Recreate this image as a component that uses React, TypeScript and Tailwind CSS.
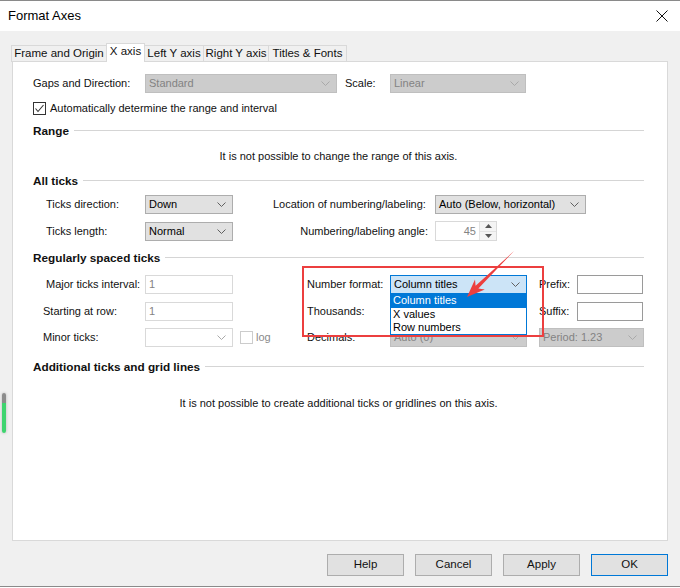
import React from "react";

const FONT = "font-['Liberation_Sans',Arial,sans-serif]";

type ComboKind = "normal" | "disabled" | "blank" | "focus";

const comboStyles: Record<ComboKind, string> = {
  normal: "bg-[#e1e1e1] border-[#adadad] text-black",
  disabled: "bg-[#cccccc] border-[#bfbfbf] text-[#838383]",
  blank: "bg-white border-[#d9d9d9] text-[#838383]",
  focus: "bg-[#cce4f7] border-[#0078d7] text-black",
};

const Chevron = ({ color = "#606060" }: { color?: string }) => (
  <svg width="9" height="5" viewBox="0 0 9 5" className="shrink-0">
    <polyline points="0.5,0.5 4.5,4.5 8.5,0.5" fill="none" stroke={color} strokeWidth="1" />
  </svg>
);

const Combo = ({
  w,
  text,
  kind = "normal",
}: {
  w: string;
  text?: string;
  kind?: ComboKind;
}) => (
  <div
    className={`${w} h-[19px] border flex items-center justify-between pl-[3px] pr-[6px] ${comboStyles[kind]}`}
  >
    <span className="whitespace-nowrap leading-none">{text}</span>
    <Chevron color={kind === "normal" || kind === "focus" ? "#606060" : "#a9a9a9"} />
  </div>
);

const TextBox = ({ value, dark }: { value?: string; dark?: boolean }) => (
  <div
    className={`h-[19px] border bg-white flex items-center pl-[3px] text-[#838383] ${
      dark ? "w-[66px] border-[#9a9a9a]" : "w-[88px] border-[#d9d9d9]"
    }`}
  >
    {value}
  </div>
);

const Check = ({ checked, disabled }: { checked?: boolean; disabled?: boolean }) => (
  <div
    className={`w-[13px] h-[13px] border bg-white flex items-center justify-center ${
      disabled ? "border-[#cccccc]" : "border-[#333333]"
    }`}
  >
    {checked && (
      <svg width="11" height="11" viewBox="0 0 11 11">
        <polyline points="1.5,5.5 4,8.5 9.5,2" fill="none" stroke="#333" strokeWidth="1.1" />
      </svg>
    )}
  </div>
);

const Header = ({ title, mt }: { title: string; mt: string }) => (
  <div className={`${mt} h-[19px] flex items-center`}>
    <span className="font-bold text-[11.75px] whitespace-nowrap">{title}</span>
    <div className="flex-1 h-px bg-[#d5d5d5] ml-[5px]" />
  </div>
);

const tabs = [
  { label: "Frame and Origin", w: "w-[96px]" },
  { label: "X axis", w: "w-[39px]", active: true },
  { label: "Left Y axis", w: "w-[60px]" },
  { label: "Right Y axis", w: "w-[66px]" },
  { label: "Titles & Fonts", w: "w-[79px]" },
];

const App = () => {
  return (
    <div
      className={`${FONT} relative w-[680px] h-[587px] bg-[#f0f0f0] border-y border-[#8a8a8a] text-[11px] text-[#111] overflow-hidden`}
    >
      {/* title bar */}
      <div className="h-[30px] bg-white flex items-center justify-between pl-[8px] pr-[12px]">
        <span className="text-[13px] text-black">Format Axes</span>
        <svg width="12" height="12" viewBox="0 0 12 12">
          <path d="M0.5 0.5 L11.5 11.5 M11.5 0.5 L0.5 11.5" stroke="#111" strokeWidth="1" />
        </svg>
      </div>

      {/* tabs */}
      <div className="mt-[12px] ml-[11px] h-[19px] -mb-px flex items-end relative z-10 text-[11.5px]">
        {tabs.map((t, i) =>
          t.active ? (
            <div
              key={t.label}
              className={`${t.w} h-[19px] -ml-px bg-white border-x border-t border-[#d9d9d9] flex items-center justify-center pb-[2px] relative z-10`}
            >
              {t.label}
            </div>
          ) : (
            <div
              key={t.label}
              className={`${t.w} h-[17px] ${i > 0 ? "-ml-px" : ""} bg-[#f0f0f0] border border-[#d9d9d9] flex items-center justify-center`}
            >
              {t.label}
            </div>
          )
        )}
      </div>

      {/* panel */}
      <div className="ml-[12px] w-[656px] h-[480px] bg-white border border-[#d9d9d9] pl-[20px] pr-[23px]">
        <div className="mt-[12px] h-[19px] flex items-center">
          <span className="w-[112px]">Gaps and Direction:</span>
          <Combo w="w-[192px]" text="Standard" kind="disabled" />
          <span className="ml-[8px] w-[45px]">Scale:</span>
          <Combo w="w-[136px]" text="Linear" kind="disabled" />
        </div>

        <div className="mt-[6px] h-[19px] flex items-center">
          <Check checked />
          <span className="ml-[4px]">Automatically determine the range and interval</span>
        </div>

        <Header title="Range" mt="mt-[3px]" />
        <div className="mt-[7px] h-[19px] flex items-center justify-center">
          It is not possible to change the range of this axis.
        </div>

        <Header title="All ticks" mt="mt-[5px]" />
        <div className="mt-[5px] h-[19px] flex items-center pl-[13px]">
          <span className="w-[99px]">Ticks direction:</span>
          <Combo w="w-[88px]" text="Down" />
          <span className="ml-[40px] w-[162px]">Location of numbering/labeling:</span>
          <Combo w="w-[151px]" text="Auto (Below, horizontal)" />
        </div>
        <div className="mt-[7px] h-[20px] flex items-center pl-[13px]">
          <span className="w-[99px]">Ticks length:</span>
          <Combo w="w-[88px]" text="Normal" />
          <span className="ml-[40px] w-[162px] text-right pr-[7px]">Numbering/labeling angle:</span>
          <div className="w-[62px] h-[20px] border border-[#d9d9d9] flex">
            <div className="flex-1 flex items-center justify-end pr-[3px] text-[#838383]">45</div>
            <div className="w-[17px] border-l border-[#e3e3e3] flex flex-col">
              <div className="flex-1 flex items-center justify-center border-b border-[#e3e3e3] bg-[#f4f4f4]">
                <svg width="7" height="4" viewBox="0 0 7 4">
                  <polygon points="0,4 7,4 3.5,0" fill="#555" />
                </svg>
              </div>
              <div className="flex-1 flex items-center justify-center bg-[#f4f4f4]">
                <svg width="7" height="4" viewBox="0 0 7 4">
                  <polygon points="0,0 7,0 3.5,4" fill="#555" />
                </svg>
              </div>
            </div>
          </div>
        </div>

        <Header title="Regularly spaced ticks" mt="mt-[7px]" />
        <div className="mt-[8px] h-[19px] flex items-center">
          <div className="w-[274px] flex items-center pl-[13px]">
            <span className="w-[99px]">Major ticks interval:</span>
            <TextBox value="1" />
          </div>
          <span className="w-[83px]">Number format:</span>
          <div className="relative z-20">
            <Combo w="w-[137px]" text="Column titles" kind="focus" />
            <div className="absolute left-0 top-[18px] w-[137px] bg-white border border-[#0078d7] text-black leading-[13px]">
              <div className="h-[14px] bg-[#0078d7] text-white pl-[2px]">Column titles</div>
              <div className="h-[13px] pl-[2px]">X values</div>
              <div className="h-[13px] pl-[2px]">Row numbers</div>
            </div>
          </div>
          <span className="ml-[12px] w-[38px]">Prefix:</span>
          <TextBox dark />
        </div>
        <div className="mt-[8px] h-[19px] flex items-center">
          <div className="w-[274px] flex items-center pl-[10px]">
            <span className="w-[102px]">Starting at row:</span>
            <TextBox value="1" />
          </div>
          <span className="w-[83px]">Thousands:</span>
          <Combo w="w-[137px]" />
          <span className="ml-[12px] w-[38px]">Suffix:</span>
          <TextBox dark />
        </div>
        <div className="mt-[7px] h-[19px] flex items-center">
          <div className="w-[274px] flex items-center pl-[10px]">
            <span className="w-[102px]">Minor ticks:</span>
            <Combo w="w-[88px]" kind="blank" />
            <div className="ml-[7px]">
              <Check disabled />
            </div>
            <span className="ml-[3px] text-[#8a8a8a]">log</span>
          </div>
          <span className="w-[83px]">Decimals:</span>
          <Combo w="w-[137px]" text="Auto (0)" kind="disabled" />
          <div className="ml-[12px]">
            <Combo w="w-[105px]" text="Period: 1.23" kind="disabled" />
          </div>
        </div>

        <Header title="Additional ticks and grid lines" mt="mt-[10px]" />
        <div className="mt-[18px] h-[19px] flex items-center justify-center">
          It is not possible to create additional ticks or gridlines on this axis.
        </div>
      </div>

      {/* buttons */}
      <div className="mt-[13px] flex justify-end gap-[11px] pr-[12px] text-[11.5px]">
        {["Help", "Cancel", "Apply", "OK"].map((b) => (
          <div
            key={b}
            className={`w-[77px] h-[22px] border flex items-center justify-center bg-[#e1e1e1] ${
              b === "OK" ? "border-[#0078d7]" : "border-[#adadad]"
            }`}
          >
            {b}
          </div>
        ))}
      </div>

      {/* screenshot annotations */}
      <div className="absolute left-[302px] top-[265px] w-[242px] h-[71px] border-2 border-[#ec3f3f] z-30" />
      <svg className="absolute left-0 top-0 z-30 pointer-events-none" width="680" height="588">
        <polygon
          points="514,250 478.4,287.6 484.8,288.4 467,296 475,278.4 475.6,284.8"
          fill="#ec3f3f"
        />
      </svg>
      <div className="absolute left-[2px] top-[392px] w-[4px] h-[40px] rounded-[2px] overflow-hidden shadow-[0_0_3px_rgba(0,0,0,0.25)] flex flex-col">
        <div className="h-[10px] bg-[#8c8c8c]" />
        <div className="flex-1 bg-[#3fd46f]" />
      </div>
    </div>
  );
};

export default App;
